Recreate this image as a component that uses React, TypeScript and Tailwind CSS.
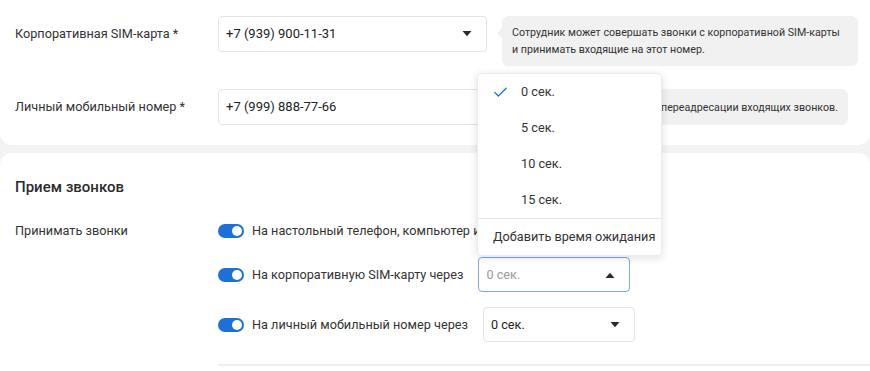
import { Check } from 'lucide-react';

const font = { fontFamily: 'Roboto, "Noto Sans", sans-serif' };

function Caret({ up = false }: { up?: boolean }) {
  return (
    <svg width="10" height="6" viewBox="0 0 10 6" className="text-[#2b2b2b]">
      {up ? <path d="M0.5 6 L5 0.8 L9.5 6 Z" fill="currentColor" /> : <path d="M0.5 0 L9.5 0 L5 5.2 Z" fill="currentColor" />}
    </svg>
  );
}

function Toggle() {
  return (
    <span className="flex h-[14px] w-[26px] shrink-0 items-center justify-end rounded-full bg-[#1f6fd8] pr-[2px]">
      <span className="h-[10px] w-[10px] rounded-full bg-white" />
    </span>
  );
}

function Hint({ children, className = '' }: { children: React.ReactNode; className?: string }) {
  return (
    <div className={`relative ml-[15px] flex items-center rounded-md bg-[#f1f1f1] px-[10px] text-[10.7px] leading-[17px] text-[#333] ${className}`}>
      <span className="absolute left-[-5px] top-[12px] h-0 w-0 border-y-[5px] border-r-[5px] border-y-transparent border-r-[#f1f1f1]" />
      {children}
    </div>
  );
}

const options = ['0 сек.', '5 сек.', '10 сек.', '15 сек.'];

export default function App() {
  return (
    <div className="relative h-[371px] w-[870px] overflow-hidden bg-[#f3f3f3] text-[12.7px] text-[#333]" style={font}>
      {/* SIM card block */}
      <div className="rounded-b-xl bg-white pb-[20px] pt-[16px]">
        <div className="flex items-start">
          <div className="flex h-[36px] w-[218px] items-center pl-[15px]">Корпоративная SIM-карта *</div>
          <div className="flex h-[36px] w-[269px] items-center justify-between rounded border border-[#e3e3e3] pl-[7px] pr-[14px] text-[13px] text-[#222]">
            +7 (939) 900-11-31
            <Caret />
          </div>
          <Hint className="h-[50px] w-[356px]">
            Сотрудник может совершать звонки с корпоративной SIM-карты и принимать входящие на этот номер.
          </Hint>
        </div>
        <div className="mt-[23px] flex items-start">
          <div className="flex h-[36px] w-[218px] items-center pl-[15px]">Личный мобильный номер *</div>
          <div className="flex h-[36px] w-[269px] items-center rounded border border-[#e3e3e3] pl-[7px] text-[13px] text-[#222]">
            +7 (999) 888-77-66
          </div>
          <Hint className="h-[36px] w-[346px] justify-end whitespace-nowrap">
            Номер используется для переадресации входящих звонков.
          </Hint>
        </div>
      </div>

      {/* Call receiving block */}
      <div className="mt-[8px] rounded-t-xl bg-white pb-[20px] pl-[15px] pt-[22px]">
        <h2 className="text-[15px] font-medium leading-[24px] text-[#2b2b2b]">Прием звонков</h2>
        <div className="mt-[22px] flex">
          <div className="w-[203px] leading-[20px]">Принимать звонки</div>
          <div className="flex flex-1 flex-col">
            <div className="flex h-[20px] items-center gap-[8px] whitespace-nowrap">
              <Toggle />
              На настольный телефон, компьютер и мобильное приложение
            </div>
            <div className="mt-[16px] flex h-[35px] items-center whitespace-nowrap">
              <Toggle />
              <span className="ml-[8px]">На корпоративную SIM-карту через</span>
              <div className="ml-[15px] flex h-[35px] w-[152px] items-center justify-between rounded border border-[#7ea6e0] pl-[7px] pr-[14px] text-[#9a9a9a]">
                0 сек.
                <Caret up />
              </div>
            </div>
            <div className="mt-[15px] flex h-[35px] items-center whitespace-nowrap">
              <Toggle />
              <span className="ml-[8px]">На личный мобильный номер через</span>
              <div className="ml-[15px] flex h-[35px] w-[152px] items-center justify-between rounded border border-[#e3e3e3] pl-[7px] pr-[14px] text-[#222]">
                0 сек.
                <Caret />
              </div>
            </div>
            <div className="mt-[22px] h-[2px] bg-[#efefef]" />
          </div>
        </div>
      </div>

      {/* Open dropdown */}
      <div className="absolute left-[477px] top-[73px] w-[185px] rounded border border-[#ececec] bg-white text-[12.7px] shadow-[0_2px_8px_rgba(0,0,0,0.12)]">
        {options.map((o, i) => (
          <div key={o} className="flex h-[36px] items-center text-[#333]">
            <span className="flex w-[43px] justify-center pl-[1px]">
              {i === 0 && <Check size={17} strokeWidth={1.75} className="text-[#1f6fd8]" />}
            </span>
            {o}
          </div>
        ))}
        <div className="h-px bg-[#e5e5e5]" />
        <div className="flex h-[36px] items-center whitespace-nowrap pl-[15px] text-[#333]">Добавить время ожидания</div>
      </div>
    </div>
  );
}
